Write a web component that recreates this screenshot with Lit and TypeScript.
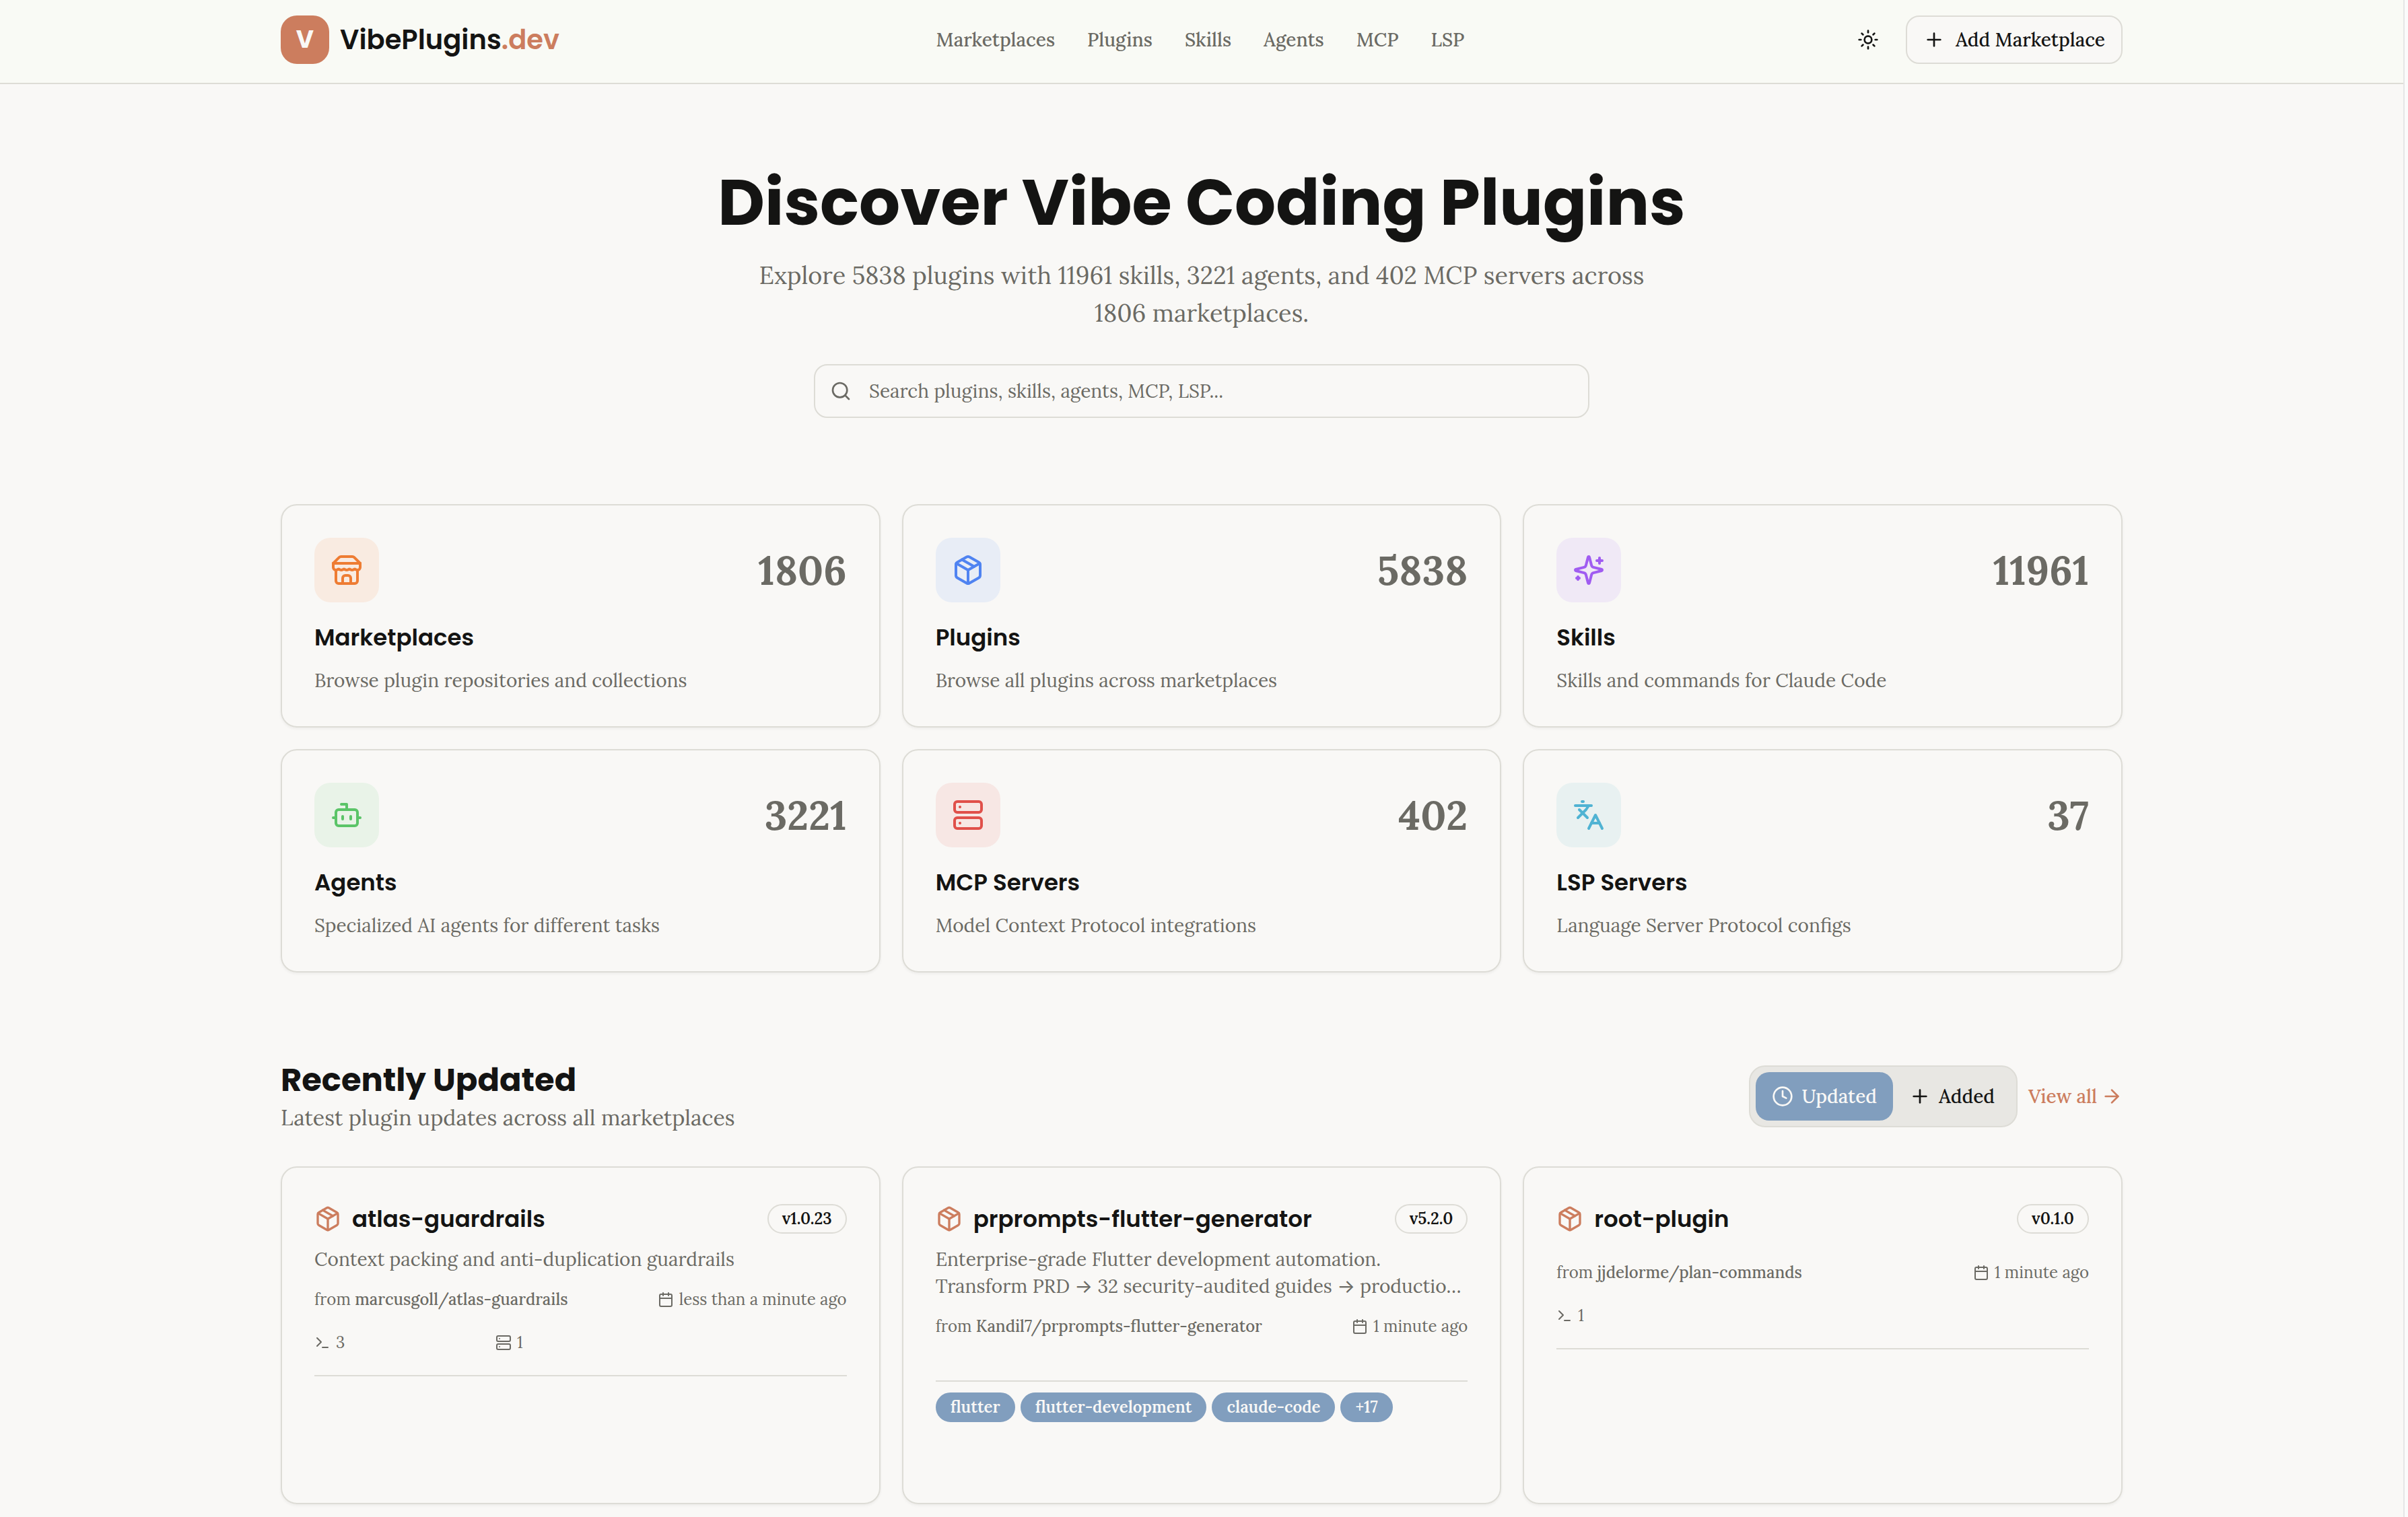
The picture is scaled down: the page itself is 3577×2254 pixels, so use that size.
import { LitElement, html, css, svg, nothing } from "lit";
import { customElement, property, state } from "lit/decorators.js";
import { classMap } from "lit/directives/class-map.js";

const glyphs = {
  store: svg`<path d="m2 7 4.41-4.41A2 2 0 0 1 7.83 2h8.34a2 2 0 0 1 1.42.59L22 7"/><path d="M4 12v8a2 2 0 0 0 2 2h12a2 2 0 0 0 2-2v-8"/><path d="M15 22v-4a2 2 0 0 0-2-2h-2a2 2 0 0 0-2 2v4"/><path d="M2 7h20"/><path d="M22 7v3a2 2 0 0 1-2 2a2.7 2.7 0 0 1-1.59-.63.7.7 0 0 0-.82 0A2.7 2.7 0 0 1 16 12a2.7 2.7 0 0 1-1.59-.63.7.7 0 0 0-.82 0A2.7 2.7 0 0 1 12 12a2.7 2.7 0 0 1-1.59-.63.7.7 0 0 0-.82 0A2.7 2.7 0 0 1 8 12a2.7 2.7 0 0 1-1.59-.63.7.7 0 0 0-.82 0A2.7 2.7 0 0 1 4 12a2 2 0 0 1-2-2V7"/>`,
  package: svg`<path d="m7.5 4.27 9 5.15"/><path d="M21 8a2 2 0 0 0-1-1.73l-7-4a2 2 0 0 0-2 0l-7 4A2 2 0 0 0 3 8v8a2 2 0 0 0 1 1.73l7 4a2 2 0 0 0 2 0l7-4A2 2 0 0 0 21 16Z"/><path d="m3.3 7 8.7 5 8.7-5"/><path d="M12 22V12"/>`,
  sparkles: svg`<path d="M9.937 15.5A2 2 0 0 0 8.5 14.063l-6.135-1.582a.5.5 0 0 1 0-.962L8.5 9.936A2 2 0 0 0 9.937 8.5l1.582-6.135a.5.5 0 0 1 .963 0L14.063 8.5A2 2 0 0 0 15.5 9.937l6.135 1.581a.5.5 0 0 1 0 .964L15.5 14.063a2 2 0 0 0-1.437 1.437l-1.582 6.135a.5.5 0 0 1-.963 0z"/><path d="M20 3v4"/><path d="M22 5h-4"/><path d="M4 17v2"/><path d="M5 18H3"/>`,
  bot: svg`<path d="M12 8V4H8"/><rect width="16" height="12" x="4" y="8" rx="2"/><path d="M2 14h2"/><path d="M20 14h2"/><path d="M15 13v2"/><path d="M9 13v2"/>`,
  server: svg`<rect width="20" height="8" x="2" y="2" rx="2"/><rect width="20" height="8" x="2" y="14" rx="2"/><path d="M6 6h.01"/><path d="M6 18h.01"/>`,
  languages: svg`<path d="m5 8 6 6"/><path d="m4 14 6-6 2-3"/><path d="M2 5h12"/><path d="M7 2h1"/><path d="m22 22-5-10-5 10"/><path d="M14 18h6"/>`,
  sun: svg`<circle cx="12" cy="12" r="4"/><path d="M12 2v2"/><path d="M12 20v2"/><path d="m4.93 4.93 1.41 1.41"/><path d="m17.66 17.66 1.41 1.41"/><path d="M2 12h2"/><path d="M20 12h2"/><path d="m6.34 17.66-1.41 1.41"/><path d="m19.07 4.93-1.41 1.41"/>`,
  plus: svg`<path d="M5 12h14"/><path d="M12 5v14"/>`,
  search: svg`<circle cx="11" cy="11" r="8"/><path d="m21 21-4.3-4.3"/>`,
  clock: svg`<circle cx="12" cy="12" r="10"/><path d="M12 6v6l4 2"/>`,
  arrow: svg`<path d="M5 12h14"/><path d="m12 5 7 7-7 7"/>`,
  calendar: svg`<path d="M8 2v4"/><path d="M16 2v4"/><rect width="18" height="18" x="3" y="4" rx="2"/><path d="M3 10h18"/>`,
  terminal: svg`<path d="m4 17 6-6-6-6"/><path d="M12 19h8"/>`,
};
type Glyph = keyof typeof glyphs;

const icon = (name: Glyph, size = "md") => html`<svg
  class="icon ${size}"
  viewBox="0 0 24 24"
  fill="none"
  stroke="currentColor"
  stroke-width="2"
  stroke-linecap="round"
  stroke-linejoin="round"
  aria-hidden="true"
>${glyphs[name]}</svg>`;

const shared = css`
  * {
    box-sizing: border-box;
  }
  h1,
  h2,
  h3,
  p {
    margin: 0;
  }
  a {
    color: inherit;
    text-decoration: none;
  }
  .icon {
    display: block;
    flex: none;
  }
  .sm {
    width: 24px;
    height: 24px;
  }
  .md {
    width: 32px;
    height: 32px;
  }
  .lg {
    width: 40px;
    height: 40px;
  }
  .xl {
    width: 48px;
    height: 48px;
  }
  .card {
    display: block;
    height: 100%;
    padding: 48px;
    border: 2px solid var(--border);
    border-radius: 24px;
    box-shadow: 0 2px 4px rgb(0 0 0 / 0.05);
  }
  .card-title {
    font-family: Poppins, Inter, sans-serif;
    font-size: 34px;
    font-weight: 600;
    line-height: 40px;
    color: var(--ink);
  }
  .card-text {
    font-family: Lora, Inter, serif;
    font-size: 28px;
    line-height: 40px;
  }
`;

@customElement("stat-card")
class StatCard extends LitElement {
  @property() label = "";
  @property() text = "";
  @property() count = "";
  @property() glyph: Glyph = "store";
  @property() tone = "orange";

  static styles = [
    shared,
    css`
      .top {
        display: flex;
        align-items: center;
        justify-content: space-between;
        margin-bottom: 32px;
      }
      .tile {
        padding: 24px;
        border-radius: 24px;
      }
      .orange {
        color: #ee7c33;
        background: #f9ebe1;
      }
      .blue {
        color: #4f83f1;
        background: #e8edf6;
      }
      .purple {
        color: #a05cf1;
        background: #f0e9f6;
      }
      .green {
        color: #5bc468;
        background: #e9f3e8;
      }
      .red {
        color: #e0504a;
        background: #f7e7e4;
      }
      .cyan {
        color: #50b3d3;
        background: #e8f1f1;
      }
      .count {
        font-size: 60px;
        font-weight: 700;
        line-height: 72px;
      }
      .card-title {
        margin-bottom: 24px;
      }
    `,
  ];

  render() {
    return html`<a class="card" href="#${this.label}">
      <div class="top">
        <div class="tile ${this.tone}">${icon(this.glyph, "xl")}</div>
        <div class="count">${this.count}</div>
      </div>
      <h3 class="card-title">${this.label}</h3>
      <p class="card-text">${this.text}</p>
    </a>`;
  }
}

interface Plugin {
  name: string;
  version: string;
  text?: string;
  source: string;
  when: string;
  counts: [Glyph, number][];
  tags?: string[];
}

@customElement("plugin-card")
class PluginCard extends LitElement {
  @property({ attribute: false }) plugin!: Plugin;

  static styles = [
    shared,
    css`
      .head {
        display: flex;
        align-items: center;
        gap: 16px;
        min-height: 68px;
        padding-bottom: 12px;
      }
      .head .icon {
        color: var(--primary);
      }
      .card-title {
        flex: 1;
      }
      .pill {
        padding: 4px 20px;
        border: 2px solid var(--border);
        border-radius: 24px;
        font-size: 24px;
        font-weight: 600;
        line-height: 32px;
        color: var(--ink);
      }
      .tag {
        color: var(--paper);
        background: var(--accent);
        border-color: var(--accent);
      }
      .meta {
        display: flex;
        justify-content: space-between;
        margin: 24px 0 32px;
        font-size: 24px;
        line-height: 32px;
      }
      .source {
        font-weight: 500;
      }
      .pair {
        display: flex;
        align-items: center;
        gap: 8px;
      }
      .counts {
        display: grid;
        grid-template-columns: repeat(3, 1fr);
        gap: 16px;
        padding-bottom: 32px;
        border-bottom: 2px solid var(--border);
        font-size: 24px;
        line-height: 32px;
      }
      .tags {
        display: flex;
        flex-wrap: wrap;
        align-content: flex-start;
        gap: 8px;
        min-height: 132px;
        padding-top: 16px;
      }
    `,
  ];

  render() {
    const p = this.plugin;
    return html`<article class="card">
      <div class="head">
        ${icon("package", "lg")}
        <h3 class="card-title">${p.name}</h3>
        <span class="pill">${p.version}</span>
      </div>
      ${p.text ? html`<p class="card-text">${p.text}</p>` : nothing}
      <div class="meta">
        <span>from <a class="source" href="#${p.source}">${p.source}</a></span>
        <span class="pair">${icon("calendar", "sm")}${p.when}</span>
      </div>
      <div class="counts">
        ${p.counts.map(([g, n]) => html`<span class="pair">${icon(g, "sm")}${n}</span>`)}
      </div>
      ${p.tags
        ? html`<div class="tags">${p.tags.map((t) => html`<span class="pill tag">${t}</span>`)}</div>`
        : nothing}
    </article>`;
  }
}

const stats = [
  ["Marketplaces", "Browse plugin repositories and collections", "1806", "store", "orange"],
  ["Plugins", "Browse all plugins across marketplaces", "5838", "package", "blue"],
  ["Skills", "Skills and commands for Claude Code", "11961", "sparkles", "purple"],
  ["Agents", "Specialized AI agents for different tasks", "3221", "bot", "green"],
  ["MCP Servers", "Model Context Protocol integrations", "402", "server", "red"],
  ["LSP Servers", "Language Server Protocol configs", "37", "languages", "cyan"],
];

const plugins: Plugin[] = [
  {
    name: "atlas-guardrails",
    version: "v1.0.23",
    text: "Context packing and anti-duplication guardrails",
    source: "marcusgoll/atlas-guardrails",
    when: "less than a minute ago",
    counts: [["terminal", 3], ["server", 1]],
  },
  {
    name: "prprompts-flutter-generator",
    version: "v5.2.0",
    text: "Enterprise-grade Flutter development automation. Transform PRD → 32 security-audited guides → productio…",
    source: "Kandil7/prprompts-flutter-generator",
    when: "1 minute ago",
    counts: [],
    tags: ["flutter", "flutter-development", "claude-code", "+17"],
  },
  {
    name: "root-plugin",
    version: "v0.1.0",
    source: "jjdelorme/plan-commands",
    when: "1 minute ago",
    counts: [["terminal", 1]],
  },
];

@customElement("app-root")
class AppRoot extends LitElement {
  @state() private tab = "Updated";

  static styles = [
    shared,
    css`
      :host {
        --paper: #f9f8f6;
        --ink: #141413;
        --muted: #6b6a64;
        --border: #dddcd6;
        --primary: #cc7d5e;
        --accent: #819ebe;
        display: flex;
        min-height: 100vh;
        font-family: Lora, "Liberation Serif", serif;
        font-size: 28px;
        line-height: 40px;
        color: var(--muted);
        background: var(--paper);
      }
      .page {
        flex: 1;
        min-width: 0;
      }
      .rail {
        width: 7px;
        border-left: 2px solid #e6e6e6;
        background: #fbfbfb;
      }
      .wrap {
        max-width: 2800px;
        margin: 0 auto;
        padding: 0 32px;
      }
      .header {
        padding: 23px 0 28px;
        border-bottom: 2px solid var(--border);
        background: #f9faf5;
      }
      .bar {
        display: flex;
        align-items: center;
        justify-content: space-between;
      }
      .brand {
        display: flex;
        align-items: center;
        gap: 16px;
        font-family: Poppins, Inter, sans-serif;
        font-size: 40px;
        font-weight: 600;
        line-height: 56px;
        color: var(--ink);
      }
      .mark {
        display: grid;
        place-items: center;
        width: 72px;
        height: 72px;
        border-radius: 24px;
        font-size: 36px;
        font-weight: 700;
        color: var(--paper);
        background: var(--primary);
      }
      .tld {
        color: var(--primary);
      }
      .nav {
        display: flex;
        gap: 48px;
        font-weight: 500;
      }
      .actions {
        display: flex;
        gap: 16px;
      }
      .btn {
        display: flex;
        align-items: center;
        height: 72px;
        margin: 0;
        padding: 0 24px;
        border: 0;
        border-radius: 20px;
        font: inherit;
        font-weight: 500;
        color: var(--ink);
        background: transparent;
        cursor: pointer;
      }
      .outline {
        gap: 16px;
        border: 2px solid var(--border);
        background: var(--paper);
      }
      .hero {
        display: flex;
        flex-direction: column;
        align-items: center;
        padding: 128px 0;
        text-align: center;
      }
      .hero-title {
        margin-bottom: 32px;
        font-family: Poppins, Inter, sans-serif;
        font-size: 96px;
        font-weight: 700;
        line-height: 96px;
        color: var(--ink);
      }
      .lead {
        max-width: 1344px;
        margin-bottom: 48px;
        font-size: 36px;
        line-height: 56px;
      }
      .search {
        display: flex;
        align-items: center;
        gap: 26px;
        width: 100%;
        max-width: 1152px;
        height: 80px;
        padding: 0 22px;
        border: 2px solid var(--border);
        border-radius: 20px;
      }
      .field {
        flex: 1;
        height: 40px;
        padding: 0;
        border: 0;
        outline: 0;
        font: inherit;
        color: var(--ink);
        background: transparent;
      }
      .field::placeholder {
        color: var(--muted);
        opacity: 1;
      }
      .grid {
        display: grid;
        grid-template-columns: repeat(3, minmax(0, 1fr));
        gap: 32px;
      }
      .section-head {
        display: flex;
        align-items: center;
        justify-content: space-between;
        padding: 128px 0 48px;
      }
      .section-title {
        font-family: Poppins, Inter, sans-serif;
        font-size: 48px;
        font-weight: 700;
        line-height: 64px;
        color: var(--ink);
      }
      .section-text {
        font-size: 32px;
        line-height: 48px;
      }
      .controls {
        display: flex;
        align-items: center;
        gap: 16px;
      }
      .tabs {
        display: flex;
        padding: 8px;
        border: 2px solid var(--border);
        border-radius: 24px;
        background: #e8e7e3;
      }
      .tab {
        gap: 12px;
      }
      .active {
        color: var(--paper);
        background: var(--accent);
      }
      .more {
        display: flex;
        align-items: center;
        gap: 6px;
        font-weight: 500;
        color: var(--primary);
      }
    `,
  ];

  private tabButton(name: string, glyph: Glyph) {
    const on = this.tab === name;
    return html`<button
      class=${classMap({ btn: true, tab: true, active: on })}
      aria-pressed=${on}
      @click=${() => (this.tab = name)}
    >
      ${icon(glyph)}${name}
    </button>`;
  }

  render() {
    return html`
      <div class="page">
        <header class="header">
          <div class="wrap bar">
            <a class="brand" href="#home">
              <span class="mark">V</span>
              <span>VibePlugins<span class="tld">.dev</span></span>
            </a>
            <nav class="nav">
              ${["Marketplaces", "Plugins", "Skills", "Agents", "MCP", "LSP"].map(
                (n) => html`<a href="#${n}">${n}</a>`,
              )}
            </nav>
            <div class="actions">
              <button class="btn" aria-label="Toggle theme">${icon("sun")}</button>
              <button class="btn outline">${icon("plus")}Add Marketplace</button>
            </div>
          </div>
        </header>
        <main class="wrap">
          <section class="hero">
            <h1 class="hero-title">Discover Vibe Coding Plugins</h1>
            <p class="lead">
              Explore 5838 plugins with 11961 skills, 3221 agents, and 402 MCP servers across 1806
              marketplaces.
            </p>
            <label class="search">
              ${icon("search")}
              <input
                class="field"
                type="search"
                aria-label="Search"
                placeholder="Search plugins, skills, agents, MCP, LSP..."
              />
            </label>
          </section>
          <section class="grid">
            ${stats.map(
              ([label, text, count, glyph, tone]) => html`<stat-card
                .label=${label}
                .text=${text}
                .count=${count}
                .glyph=${glyph as Glyph}
                .tone=${tone}
              ></stat-card>`,
            )}
          </section>
          <section>
            <div class="section-head">
              <div>
                <h2 class="section-title">Recently Updated</h2>
                <p class="section-text">Latest plugin updates across all marketplaces</p>
              </div>
              <div class="controls">
                <div class="tabs">
                  ${this.tabButton("Updated", "clock")} ${this.tabButton("Added", "plus")}
                </div>
                <a class="more" href="#all">View all ${icon("arrow")}</a>
              </div>
            </div>
            <div class="grid">
              ${plugins.map((p) => html`<plugin-card .plugin=${p}></plugin-card>`)}
            </div>
          </section>
        </main>
      </div>
      <div class="rail"></div>
    `;
  }
}
